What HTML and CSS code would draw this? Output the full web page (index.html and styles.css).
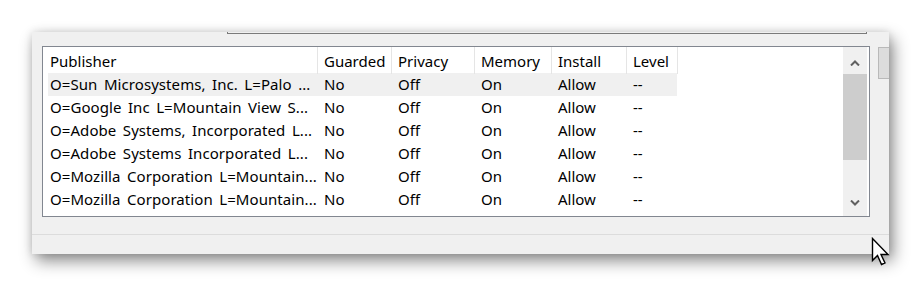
FILE: index.html
```html
<!DOCTYPE html>
<html lang="en">
<head>
    <meta charset="UTF-8">
    <title>Publisher settings</title>
    <link rel="stylesheet" href="styles.css">
</head>
<body>
    <div class="window">
        <div class="window-body">
            <div class="pane">
                <div class="edit-stub"></div>

                <div class="list">
                    <div class="list-main">
                        <div class="list-header">
                            <div class="col">Publisher</div>
                            <div class="col">Guarded</div>
                            <div class="col">Privacy</div>
                            <div class="col">Memory</div>
                            <div class="col">Install</div>
                            <div class="col">Level</div>
                        </div>
                        <div class="rows">
                            <div class="row selected">
                                <div class="cell">O=Sun Microsystems, Inc. L=Palo ...</div>
                                <div class="cell">No</div>
                                <div class="cell">Off</div>
                                <div class="cell">On</div>
                                <div class="cell">Allow</div>
                                <div class="cell">--</div>
                            </div>
                            <div class="row">
                                <div class="cell">O=Google Inc L=Mountain View S...</div>
                                <div class="cell">No</div>
                                <div class="cell">Off</div>
                                <div class="cell">On</div>
                                <div class="cell">Allow</div>
                                <div class="cell">--</div>
                            </div>
                            <div class="row">
                                <div class="cell">O=Adobe Systems, Incorporated L...</div>
                                <div class="cell">No</div>
                                <div class="cell">Off</div>
                                <div class="cell">On</div>
                                <div class="cell">Allow</div>
                                <div class="cell">--</div>
                            </div>
                            <div class="row">
                                <div class="cell">O=Adobe Systems Incorporated L...</div>
                                <div class="cell">No</div>
                                <div class="cell">Off</div>
                                <div class="cell">On</div>
                                <div class="cell">Allow</div>
                                <div class="cell">--</div>
                            </div>
                            <div class="row">
                                <div class="cell">O=Mozilla Corporation L=Mountain...</div>
                                <div class="cell">No</div>
                                <div class="cell">Off</div>
                                <div class="cell">On</div>
                                <div class="cell">Allow</div>
                                <div class="cell">--</div>
                            </div>
                            <div class="row">
                                <div class="cell">O=Mozilla Corporation L=Mountain...</div>
                                <div class="cell">No</div>
                                <div class="cell">Off</div>
                                <div class="cell">On</div>
                                <div class="cell">Allow</div>
                                <div class="cell">--</div>
                            </div>
                        </div>
                    </div>

                    <div class="scrollbar">
                        <div class="scroll-btn up">
                            <svg width="10" height="6" viewBox="0 0 10 6"><path d="M1 5.5 L5 1.5 L9 5.5" fill="none" stroke="#606060" stroke-width="2"/></svg>
                        </div>
                        <div class="scroll-track">
                            <div class="scroll-thumb"></div>
                        </div>
                        <div class="scroll-btn">
                            <svg width="10" height="6" viewBox="0 0 10 6"><path d="M1 0.5 L5 4.5 L9 0.5" fill="none" stroke="#606060" stroke-width="2"/></svg>
                        </div>
                    </div>
                </div>
            </div>

            <div class="pane-scroll">
                <div class="pane-thumb"></div>
            </div>
        </div>
        <div class="status"></div>
    </div>

    <svg class="cursor" width="20" height="30" viewBox="0 0 20 30">
        <path d="M1.5 1.5 L1.5 23.5 L6.5 18.5 L10.5 27.5 L14 26 L10 17.5 L17 17.5 Z" fill="#fff" stroke="#000" stroke-width="1.4" stroke-linejoin="miter"/>
    </svg>
</body>
</html>
```

FILE: styles.css
```css
* {
    box-sizing: border-box;
    margin: 0;
    padding: 0;
}

body {
    background: #ffffff;
    font-family: 'Noto Sans', 'Open Sans', sans-serif;
    font-size: 15px;
    color: #000000;
    width: 921px;
    height: 287px;
    overflow: hidden;
    position: relative;
}

.window {
    margin: 32px 0 0 32px;
    width: 857px;
    height: 222px;
    background: #f0f0f0;
    display: flex;
    flex-direction: column;
    box-shadow: 4px 7px 15px rgba(0, 0, 0, 0.45), 0 0 8px rgba(0, 0, 0, 0.12);
}

.window-body {
    display: flex;
    height: 202px;
}

.pane {
    flex: 1;
}

.edit-stub {
    margin-left: 195px;
    width: 640px;
    height: 2px;
    border: 1px solid #7a7a7a;
    border-top: none;
}

/* list view */
.list {
    margin: 12px 0 0 10px;
    width: 828px;
    height: 171px;
    background: #ffffff;
    border: 1px solid #828790;
    padding-right: 2px;
    display: flex;
}

.list-main {
    flex: 1;
}

.list-header {
    display: grid;
    grid-template-columns: 275px 74px 83px 77px 75px 51px;
    height: 26px;
}

.col {
    border-right: 1px solid #e5e5e5;
    padding-left: 6px;
    padding-top: 1px;
    line-height: 26px;
    white-space: nowrap;
}

.col:first-child {
    padding-left: 7px;
}

.rows {
    margin-left: 5px;
}

.row {
    display: grid;
    grid-template-columns: 270px 74px 83px 77px 75px 50px;
    height: 23px;
    width: 629px;
}

.row.selected {
    background: #f0f0f0;
}

.cell {
    padding-left: 6px;
    line-height: 23px;
    white-space: nowrap;
    overflow: hidden;
}

.cell:first-child {
    padding-left: 2px;
    word-spacing: 2.5px;
    letter-spacing: 0.07px;
}

/* list scrollbar */
.scrollbar {
    width: 24px;
    background: #f0f0f0;
    display: flex;
    flex-direction: column;
}

.scroll-btn {
    height: 26px;
    display: flex;
    align-items: center;
    justify-content: center;
}

.scroll-btn.up {
    padding-top: 6px;
}

.scroll-track {
    flex: 1;
    padding-top: 1px;
}

.scroll-thumb {
    height: 86px;
    background: #cdcdcd;
}

/* outer pane scrollbar, cut off by the window edge */
.pane-scroll {
    width: 11px;
    padding-top: 15px;
}

.pane-thumb {
    height: 32px;
    background: #dcdcdc;
    border: 1px solid #b9b9b9;
    border-right: none;
}

.status {
    flex: 1;
    border-top: 1px solid #dcdcdc;
}

.cursor {
    position: absolute;
    left: 871px;
    top: 237px;
}
```
